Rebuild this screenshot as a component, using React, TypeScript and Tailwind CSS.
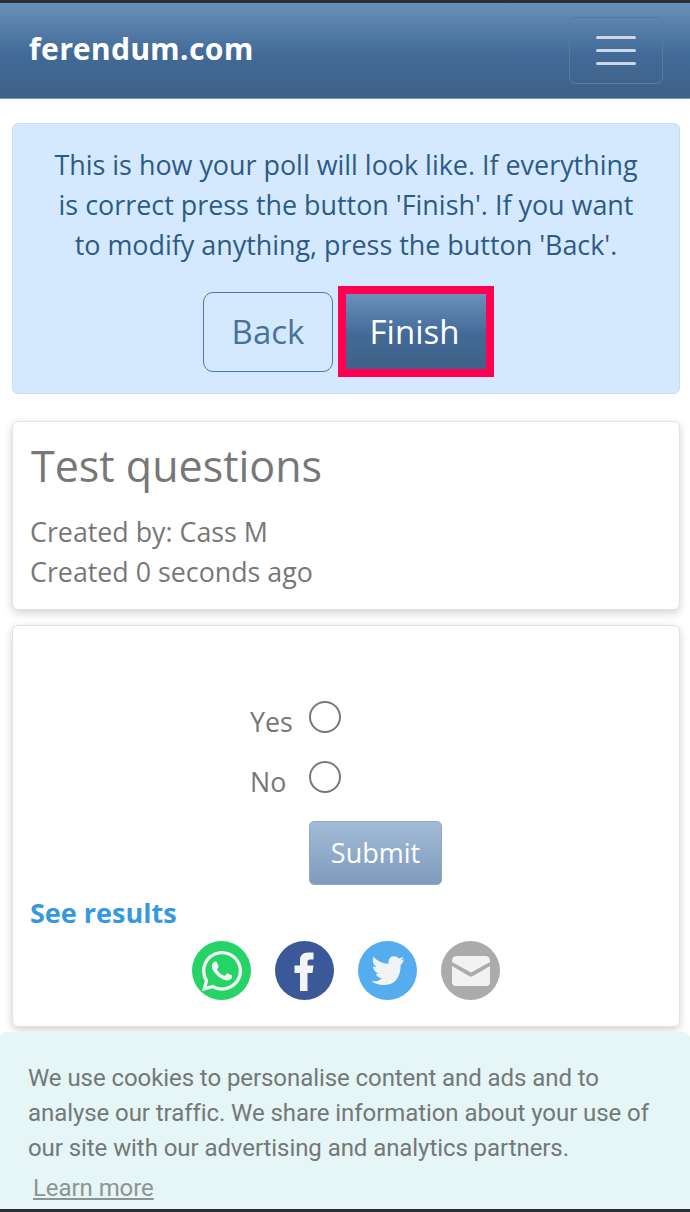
import { FaWhatsapp } from "react-icons/fa";

const sans = "font-['Open_Sans',sans-serif]";
const blueGradient = "bg-[linear-gradient(to_bottom,#6a90bb_0%,#426a96_55%,#3f6088_100%)]";

function Header() {
  return (
    <header className="h-[99px] border-t-[3px] border-t-[#2b2f36] border-b border-b-[#7f9db8] bg-[linear-gradient(to_bottom,#6890bb_0%,#426a96_55%,#3f6088_100%)] pl-[29px] pr-[27px] flex items-center justify-between">
      <span className="font-['Noto_Sans',sans-serif] font-bold text-[30px] leading-none text-white tracking-[0.45px] mb-[4px]">
        ferendum.com
      </span>
      <button className="w-[94px] h-[67px] rounded-[6px] border border-[#557aa3] flex flex-col items-center justify-center gap-[10px]">
        <span className="block w-[40px] h-[3px] rounded-full bg-[#c9d7e6]" />
        <span className="block w-[40px] h-[3px] rounded-full bg-[#c9d7e6]" />
        <span className="block w-[40px] h-[3px] rounded-full bg-[#c9d7e6]" />
      </button>
    </header>
  );
}

function Notice() {
  return (
    <section className="h-[271px] rounded-[6px] border border-[#c5e0f5] bg-[#d4e9fd] pt-[21px] flex flex-col items-center">
      <p className="w-[600px] text-center text-[26.9px] leading-[40px] text-[#2d5b86]">
        This is how your poll will look like. If everything is correct press the button 'Finish'. If you want to modify anything, press the button 'Back'.
      </p>
      <div className="mt-[21px] ml-[5px] flex items-center gap-[5px]">
        <button className="w-[130px] h-[80px] rounded-[10px] border border-[#4f7aa3] text-[33px] text-[#47729b]">
          Back
        </button>
        <button className={`w-[156px] h-[91px] border-[8px] border-[#ff0050] pr-[3px] text-[33px] text-white ${blueGradient}`}>
          Finish
        </button>
      </div>
    </section>
  );
}

function PollInfo() {
  return (
    <section className="mt-[27px] h-[189px] rounded-[6px] border border-[#e2e2e2] bg-white shadow-[0_3px_8px_rgba(0,0,0,0.18)] pl-[17px] pt-[17px] text-[#777777]">
      <h1 className="ml-[1px] text-[43px] leading-[54px]">Test questions</h1>
      <p className="mt-[19px] text-[26.8px] leading-[40px]">Created by: Cass M</p>
      <p className="text-[26.8px] leading-[40px]">Created 0 seconds ago</p>
    </section>
  );
}

function Choice({ label }: { label: string }) {
  return (
    <div className="h-[60px] flex items-start">
      <span className="w-[59px] pt-[1px] text-[26.8px] leading-[40px] text-[#777777]">{label}</span>
      <span className="w-[32px] h-[32px] rounded-full border-2 border-[#777777] bg-white" />
    </div>
  );
}

function ShareIcon({ color, children }: { color: string; children: React.ReactNode }) {
  return (
    <span className={`w-[59px] h-[59px] rounded-full overflow-hidden flex items-center justify-center ${color}`}>
      {children}
    </span>
  );
}

function FacebookGlyph() {
  return (
    <svg viewBox="0 0 59 59" className="w-[59px] h-[59px]">
      <path
        d="M25 50 V32 H19.5 V24.5 H25 V19 Q25 11.5 33 11.5 H38.5 V18.5 H35 Q32.5 18.5 32.5 21 V24.5 H38.5 L37.5 32 H32.5 V50 Z"
        fill="#f2f5f3"
      />
    </svg>
  );
}

function TwitterGlyph() {
  return (
    <svg viewBox="0 0 59 59" className="w-[59px] h-[59px]">
      <path
        d="M46 18 Q44.5 19 42.5 19.3 Q44.8 18 45.3 15.8 Q43.2 17 41 17.4 Q39 15.2 36.2 15.2 Q31 15.2 30.4 21 Q30.4 22.2 30.6 22.8 Q21.6 22.4 15.3 15.8 Q13.4 22.5 18.5 26.2 Q16.6 26.2 15 25.2 Q15.3 31 21 32.4 Q19.4 32.8 17.8 32.5 Q19.4 37 24.2 37.4 Q19.6 41 13.6 40.2 Q19 44 25.4 44 Q41 44 42.6 26.4 L42.6 24 Q44.8 22.4 46 18 Z"
        fill="#f1f4f5"
      />
    </svg>
  );
}

function MailGlyph() {
  return (
    <svg viewBox="0 0 40 32" className="w-[40px] h-[32px]">
      <path d="M1 6 Q1 1 6 1 H34 Q39 1 39 6 V7 L21 17 Q20 17.6 19 17 L1 7 Z" fill="#f2f2f2" />
      <path d="M1 11 L18 21 Q20 22.2 22 21 L39 11 V27 Q39 31 35 31 H5 Q1 31 1 27 Z" fill="#f2f2f2" />
    </svg>
  );
}

function PollForm() {
  return (
    <section className="mt-[15px] h-[402px] rounded-[6px] border border-[#e2e2e2] bg-white shadow-[0_3px_8px_rgba(0,0,0,0.18)] pt-[75px]">
      <div className="pl-[237px]">
        <Choice label="Yes" />
        <Choice label="No" />
        <button className="ml-[59px] w-[133px] h-[64px] rounded-[5px] border border-[#8fa9c6] bg-[linear-gradient(to_bottom,#a2bbd7_0%,#7f9bbb_100%)] text-[27px] text-white">
          Submit
        </button>
      </div>
      <a className="block ml-[17px] mt-[10px] text-[27px] leading-[36px] font-bold text-[#3598e0]">See results</a>
      <div className="mt-[10px] flex justify-center gap-[24px]">
        <ShareIcon color="bg-[#25d366]">
          <FaWhatsapp className="w-[46px] h-[46px] text-[#f2f5f3]" />
        </ShareIcon>
        <ShareIcon color="bg-[#3b5998]">
          <FacebookGlyph />
        </ShareIcon>
        <ShareIcon color="bg-[#55acee]">
          <TwitterGlyph />
        </ShareIcon>
        <ShareIcon color="bg-[#ababab]">
          <MailGlyph />
        </ShareIcon>
      </div>
    </section>
  );
}

function CookieBar() {
  return (
    <div className="absolute left-0 right-0 bottom-0 h-[180px] rounded-t-[6px] bg-[#e6f5f5] pl-[28px] pt-[29px] font-['Roboto',sans-serif] text-[24px] tracking-[-0.07px] leading-[35px] text-[#737878] border-b-[3px] border-b-[#2b2f36]">
      <p className="w-[640px]">
        We use cookies to personalise content and ads and to analyse our traffic. We share information about your use of our site with our advertising and analytics partners.
      </p>
      <a className="inline-block ml-[5px] mt-[8px] leading-[28px] text-[#8d9494] underline">Learn more</a>
    </div>
  );
}

export default function App() {
  return (
    <div className={`relative h-[1212px] overflow-hidden bg-white ${sans}`}>
      <Header />
      <main className="pl-[12px] pr-[10px] pt-[24px]">
        <Notice />
        <PollInfo />
        <PollForm />
      </main>
      <CookieBar />
    </div>
  );
}
